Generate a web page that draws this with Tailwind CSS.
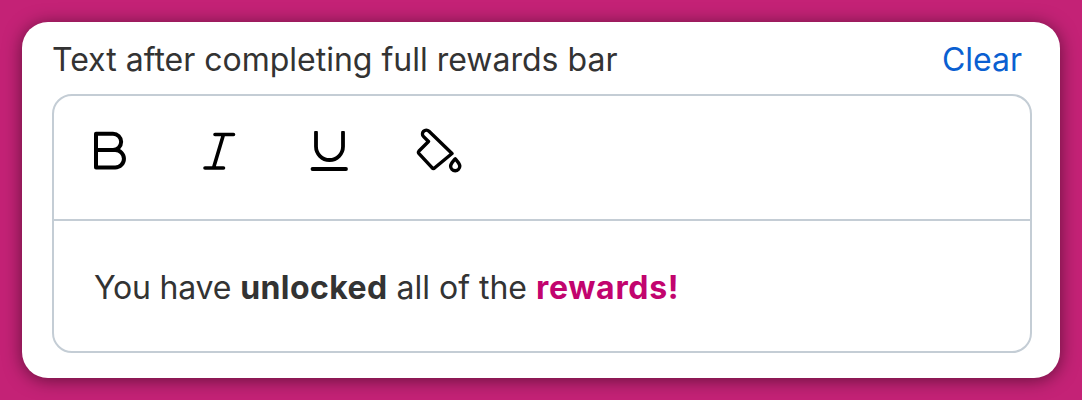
<!DOCTYPE html>
<html lang="en">
<head>
    <meta charset="UTF-8">
    <title>Rewards bar text</title>
    <script src="https://cdn.jsdelivr.net/npm/@tailwindcss/browser@4"></script>
</head>
<body class="bg-[#c42276] w-[1082px] h-[400px] overflow-hidden font-['Inter',sans-serif]">

    <div class="p-[22px]">
        <div class="w-[1038px] h-[356px] bg-white rounded-[26px] shadow-[0_2px_18px_rgba(0,0,0,0.5)] pl-[30px] pr-[28px]">

            <div class="h-[72px] flex items-center justify-between pt-[4px]">
                <span class="text-[32px] leading-[40px] text-[#333333]">Text after completing full rewards bar</span>
                <span class="text-[32px] leading-[40px] text-[#0a5fd1] pr-[10px]">Clear</span>
            </div>

            <div class="w-[980px] h-[259px] border-2 border-[#c4cdd5] rounded-[20px]">
                <div class="h-[125px] border-b-2 border-[#c4cdd5] flex items-center gap-[70px] pl-[36px] pb-[13px]">
                    <!-- bold -->
                    <svg class="w-[40px] h-[40px]" viewBox="0 0 40 40" fill="none" stroke="#000" stroke-width="4" stroke-linecap="round" stroke-linejoin="round">
                        <path d="M6 2.700H23a8.150 8.150 0 0 1 0 16.300H6ZM6 19H25.200a8.750 8.750 0 0 1 0 17.500H6Z"/>
                    </svg>
                    <!-- italic -->
                    <svg class="w-[40px] h-[40px]" viewBox="0 0 40 40" fill="none" stroke="#000" stroke-width="3.6" stroke-linecap="round" stroke-linejoin="round">
                        <path d="M15 3.500H33.500M5 37H23.500M23.500 3.500L13.500 37"/>
                    </svg>
                    <!-- underline -->
                    <svg class="w-[40px] h-[40px]" viewBox="0 0 40 40" fill="none" stroke="#000" stroke-width="3.8" stroke-linecap="round" stroke-linejoin="round">
                        <path d="M6 1.500V15.500a13.500 13.500 0 0 0 27 0V1.500"/>
                        <path d="M2.500 38H36"/>
                    </svg>
                    <!-- fill bucket -->
                    <svg class="w-[46px] h-[46px] ml-[-4px]" viewBox="0 0 46 46" fill="none" stroke="#000" stroke-width="3.4" stroke-linecap="round" stroke-linejoin="round">
                        <path d="M36 25.500L13 3.200A3.800 3.800 0 0 0 7.600 8.600L12.500 13.500L3 23a2 2 0 0 0 0 2.600L16 39.700a2 2 0 0 0 2.800 0Z"/>
                        <path d="M39.200 30.800c-2 2.700-4.600 4.700-4.600 7.300a4.600 4.600 0 0 0 9.200 0c0-2.600-2.600-4.600-4.600-7.300Z"/>
                    </svg>
                </div>
                <div class="h-[130px] flex items-center pl-[40px] pt-[4px] text-[32px] leading-[40px] text-[#333333]">
                    <p><span class="tracking-[-0.2px]">You have</span> <b class="font-bold tracking-[0.4px]">unlocked</b> all of the <b class="font-bold text-[#c2046e] tracking-[0.7px]">rewards!</b></p>
                </div>
            </div>

        </div>
    </div>

</body>
</html>
